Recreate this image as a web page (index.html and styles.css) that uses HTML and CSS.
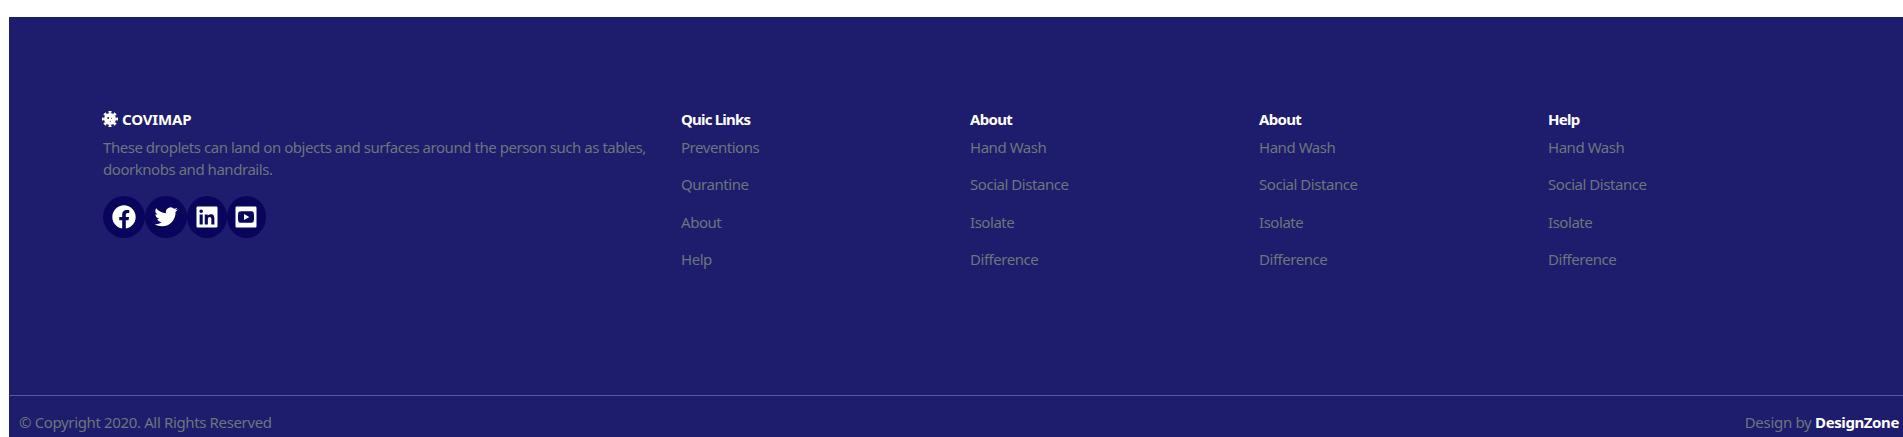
FILE: index.html
```html
<!DOCTYPE html>
<html lang="en">
<head>
<meta charset="utf-8">
<title>Covimap</title>
<link rel="stylesheet" href="styles.css">
</head>
<body>
<footer class="footer">
  <div class="columns">
    <section class="brand">
      <h3 class="title logo"><svg class="virus" viewBox="0 0 16 16"><g fill="none" stroke="#fff" stroke-width="1.5"><path d="M8 0.700V15.300M0.700 8H15.300M2.900 2.900L13.100 13.100M13.100 2.900L2.900 13.100"/><path d="M6.500 .8H9.500M6.500 15.200H9.500M.8 6.500V9.500M15.200 6.500V9.500M1.900 4.100L4.100 1.900M11.900 1.900L14.100 4.100M14.100 11.900L11.900 14.100M4.100 14.100L1.900 11.900"/></g><circle cx="8" cy="8" r="6" fill="#fff"/><g fill="#1e1c6c"><circle cx="6.200" cy="6.900" r="1"/><circle cx="9.500" cy="7.200" r=".5"/><circle cx="8.300" cy="10.200" r=".5"/></g></svg><span>COVIMAP</span></h3>
      <p class="about">These droplets can land on objects and surfaces around the person such as tables,<br>doorknobs and handrails.</p>
      <div class="social">
        <a class="badge"><svg class="icon" viewBox="0 0 24 24"><path d="M12 2C6.480 2 2 6.480 2 12c0 4.990 3.660 9.130 8.440 9.880v-6.990H7.900V12h2.540V9.800c0-2.510 1.490-3.890 3.780-3.890 1.090 0 2.240.190 2.240.190v2.460h-1.270c-1.240 0-1.630.770-1.630 1.560V12h2.780l-.450 2.890h-2.330v6.990C18.340 21.130 22 16.990 22 12c0-5.520-4.480-10-10-10z"/></svg></a>
        <a class="badge"><svg class="icon" viewBox="0 0 24 24"><path d="M22.160 5.660c-.750.330-1.550.550-2.360.650a4.130 4.130 0 0 0 1.800-2.280c-.790.470-1.670.810-2.600.990a4.100 4.100 0 0 0-7 3.740 11.650 11.650 0 0 1-8.460-4.290 4.110 4.110 0 0 0 1.280 5.480 4.070 4.070 0 0 1-1.860-.510v.050a4.100 4.100 0 0 0 3.300 4.020 4.100 4.100 0 0 1-1.860.070 4.110 4.110 0 0 0 3.840 2.850A8.230 8.230 0 0 1 2.180 18.130a11.600 11.600 0 0 0 6.290 1.840c7.550 0 11.680-6.250 11.680-11.670 0-.180 0-.350-.010-.530a8.360 8.360 0 0 0 2.020-2.110z"/></svg></a>
        <a class="badge narrow"><svg class="icon" viewBox="0 0 24 24"><path fill-rule="evenodd" d="M4 3h16a1 1 0 0 1 1 1v16a1 1 0 0 1-1 1H4a1 1 0 0 1-1-1V4a1 1 0 0 1 1-1zM18.340 18.340v-4.670c0-2.300-.500-4.060-3.170-4.060-1.290 0-2.150.700-2.500 1.370h-.040V9.820h-2.560v8.520h2.670v-4.220c0-1.110.210-2.190 1.590-2.190 1.360 0 1.380 1.270 1.380 2.260v4.150zM7 8.650a1.550 1.550 0 1 0 0-3.100 1.550 1.550 0 0 0 0 3.100zM8.340 18.340V9.820H5.670v8.520z"/></svg></a>
        <a class="badge narrow"><svg class="icon" viewBox="0 0 24 24"><path fill-rule="evenodd" d="M4 3h16a1 1 0 0 1 1 1v16a1 1 0 0 1-1 1H4a1 1 0 0 1-1-1V4a1 1 0 0 1 1-1zM12 7c-5.300 0-6 .2-6.300.8C5.300 8.500 5.100 10 5.100 12s.2 3.500.6 4.200C6 16.800 6.700 17 12 17s6-.2 6.300-.8c.4-.7.600-2.200.600-4.200s-.2-3.500-.600-4.200C18 7.200 17.300 7 12 7zM10.300 9.500L14.800 12l-4.500 2.500z"/></svg></a>
      </div>
    </section>
    <section>
      <h3 class="title quick">Quic Links</h3>
      <ul class="links"><li>Preventions</li><li>Qurantine</li><li>About</li><li>Help</li></ul>
    </section>
    <section>
      <h3 class="title">About</h3>
      <ul class="links"><li>Hand Wash</li><li>Social Distance</li><li>Isolate</li><li>Difference</li></ul>
    </section>
    <section>
      <h3 class="title">About</h3>
      <ul class="links"><li>Hand Wash</li><li>Social Distance</li><li>Isolate</li><li>Difference</li></ul>
    </section>
    <section>
      <h3 class="title">Help</h3>
      <ul class="links"><li>Hand Wash</li><li>Social Distance</li><li>Isolate</li><li>Difference</li></ul>
    </section>
  </div>
  <div class="bottom">
    <span class="copyright">© Copyright 2020. All Rights Reserved</span>
    <span class="credit">Design by <b class="studio">DesignZone</b></span>
  </div>
</footer>
</body>
</html>
```
FILE: styles.css
```css
* { box-sizing: border-box; }
html, body { height: 100%; margin: 0; }
body {
  padding: 17px 0 0 9px;
  overflow: hidden;
  background: #fff;
  font: 15px/22px "Noto Sans", "Open Sans", sans-serif;
  letter-spacing: -0.46px;
  color: #6c757d;
}
.footer {
  display: flex;
  flex-direction: column;
  height: 420px;
  background: #1e1c6c;
}
.columns {
  display: grid;
  grid-template-columns: 578px repeat(4, 289px);
  height: 378px;
  padding: 91px 0 0 94px;
}
.title {
  height: 28px;
  margin: 0;
  font-size: 15px;
  font-weight: 700;
  line-height: 22px;
  letter-spacing: -0.7px;
  color: #fff;
}
.logo { display: flex; gap: 4px; letter-spacing: -0.15px; }
.quick { letter-spacing: -0.8px; }
.virus { width: 16px; height: 16px; margin-top: 3px; margin-left: -1px; }
.about { margin: 0; white-space: nowrap; }
.social { display: flex; margin-top: 16px; }
.badge {
  display: flex;
  align-items: center;
  justify-content: center;
  width: 42px;
  height: 42px;
  border-radius: 50%;
  background: #09055d;
}
.narrow { width: 39.5px; }
.icon { flex: none; width: 28px; height: 28px; fill: #fff; }
.links { margin: 0; padding: 0; list-style: none; }
.links li { height: 37.4px; }
.bottom {
  display: flex;
  justify-content: space-between;
  height: 42px;
  padding: 15px 4px 0 10px;
  border-top: 1px solid #58569c;
}
.copyright { letter-spacing: -0.36px; }
.credit { letter-spacing: -0.3px; }
.studio { letter-spacing: -0.4px; color: #fff; }
```
